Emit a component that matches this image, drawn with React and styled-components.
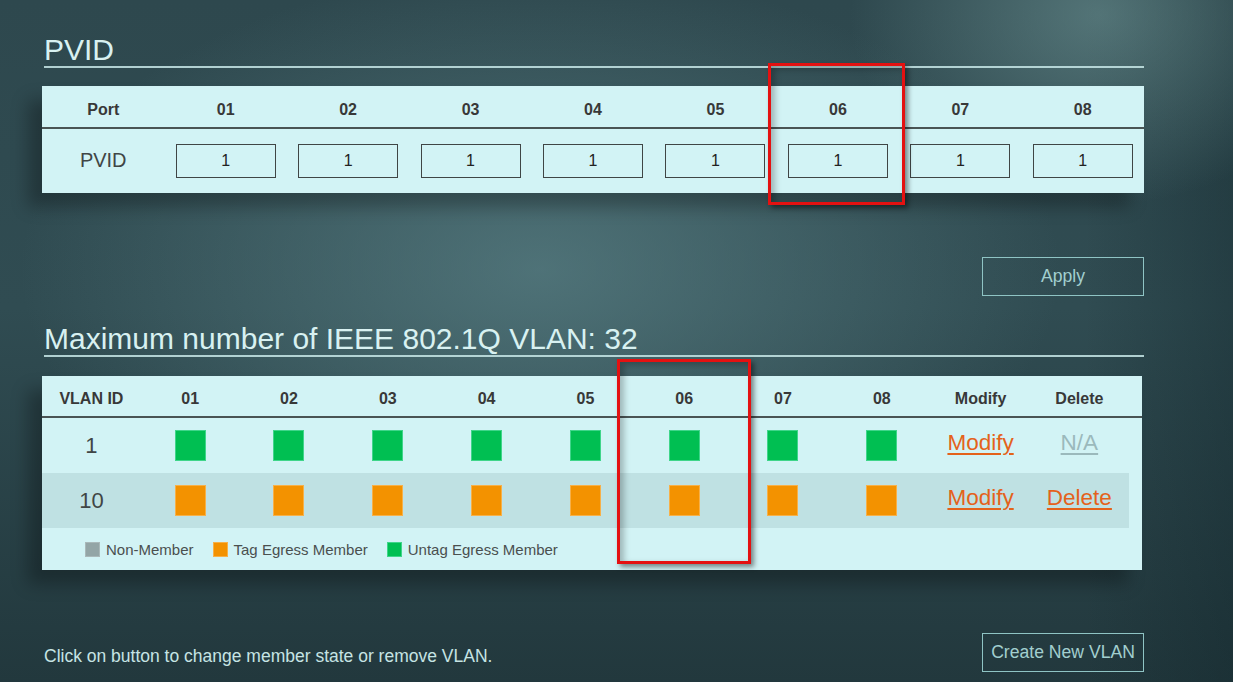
import React from "react";
import styled, { createGlobalStyle } from "styled-components";

const Global = createGlobalStyle`
  html, body { margin: 0; padding: 0; }
  body { font-family: "Liberation Sans", Arial, sans-serif; overflow: hidden; }
`;

const Page = styled.div`
  width: 1233px;
  height: 682px;
  box-sizing: border-box;
  padding: 34px 0 0 42px;
  background:
    radial-gradient(ellipse 250px 190px at 1100px 15px, rgba(120,160,160,0.5), rgba(120,160,160,0) 100%),
    radial-gradient(ellipse 520px 300px at 540px 270px, rgba(95,135,140,0.65), rgba(95,135,140,0) 100%),
    linear-gradient(90deg, rgba(0,0,0,0) 88%, rgba(15,35,40,0.35) 100%),
    linear-gradient(180deg, #2e484e 0%, #304c52 45%, #22383d 100%);
  overflow: hidden;
`;

const Column = styled.div`
  width: 1102px;
  display: flex;
  flex-direction: column;
`;

const Heading = styled.h2`
  margin: ${(p) => p.$mt || 0}px 0 0 2px;
  font-weight: normal;
  font-size: 30px;
  line-height: 32px;
  color: #d8f1f1;
  border-bottom: 2px solid rgba(200, 232, 232, 0.85);
`;

const PanelWrap = styled.div`
  position: relative;
  margin-top: ${(p) => p.$mt}px;
  width: ${(p) => p.$w}px;
`;

const Panel = styled.div`
  background: #d2f3f5;
  box-shadow: -14px 14px 16px rgba(0, 0, 0, 0.28);
  color: #3a3a3a;
`;

const Grid = styled.div`
  display: grid;
  grid-template-columns: ${(p) => p.$cols};
  align-items: center;
  justify-items: center;
  height: ${(p) => p.$h}px;
  box-sizing: border-box;
  padding-right: ${(p) => p.$pr || 0}px;
  padding-top: ${(p) => p.$pt || 0}px;
  background: ${(p) => p.$bg || "transparent"};
  border-bottom: ${(p) => (p.$line ? "2px solid #4a5454" : "none")};
`;

const HeadCell = styled.div`
  font-weight: bold;
  font-size: 16px;
  color: #383838;
`;

const RowLabel = styled.div`
  font-size: 20px;
  color: #404545;
  margin-top: -2px;
`;

const PvidInput = styled.div`
  width: 100px;
  height: 34px;
  box-sizing: border-box;
  border: 1px solid #3f4545;
  display: flex;
  align-items: center;
  justify-content: center;
  font-size: 16px;
  color: #222;
`;

const Highlight = styled.div`
  position: absolute;
  left: ${(p) => p.$l}px;
  top: ${(p) => p.$t}px;
  width: ${(p) => p.$w}px;
  height: ${(p) => p.$h}px;
  box-sizing: border-box;
  border: 3px solid #e41111;
  box-shadow: 3px 3px 5px rgba(0, 0, 0, 0.45), inset 4px 3px 6px rgba(0, 0, 0, 0.25);
  pointer-events: none;
`;

const ButtonRow = styled.div`
  display: flex;
  justify-content: ${(p) => p.$justify || "flex-end"};
  align-items: flex-end;
  margin-top: ${(p) => p.$mt}px;
`;

const OutlineButton = styled.button`
  width: 162px;
  height: ${(p) => p.$h || 38}px;
  background: transparent;
  border: 1px solid #8fc4c4;
  color: #a2cfcf;
  font-family: "Liberation Sans", Arial, sans-serif;
  font-size: 17.6px;
  padding: 0;
`;

const Square = styled.div`
  width: ${(p) => p.$s}px;
  height: ${(p) => p.$s}px;
  box-sizing: border-box;
  background: ${(p) => p.$c};
  border: 1px solid ${(p) => p.$b};
`;

const VlanId = styled.div`
  font-size: 22px;
  color: #404545;
`;

const LinkText = styled.a`
  font-size: 22.5px;
  margin-top: -5px;
  color: ${(p) => (p.$muted ? "#9bb9bc" : "#e4621b")};
  text-decoration: underline;
  text-underline-offset: 3px;
  cursor: pointer;
`;

const Legend = styled.div`
  display: flex;
  align-items: center;
  height: 42px;
  padding-left: 43px;
  font-size: 15px;
  color: #4a4f4f;
`;

const LegendItem = styled.div`
  display: flex;
  align-items: center;
  gap: 6px;
  margin-right: 19px;
`;

const Note = styled.div`
  font-size: 17.5px;
  color: #c6e4e4;
  padding: 0 0 5px 2px;
`;

const ports = ["01", "02", "03", "04", "05", "06", "07", "08"];

const GREEN = { c: "#00bf52", b: "#3fd58a" };
const ORANGE = { c: "#f39200", b: "#f7b048" };
const GREY = { c: "#93a5a6", b: "#a9b8b9" };

const vlanCols = "repeat(11, 98.8px)";

export default function App() {
  return (
    <Page>
      <Global />
      <Column>
        <Heading>PVID</Heading>

        <PanelWrap $mt={18} $w={1102}>
          <Panel>
            <Grid $cols="repeat(9, 1fr)" $h={43} $pt={6} $line>
              <HeadCell>Port</HeadCell>
              {ports.map((p) => (
                <HeadCell key={p}>{p}</HeadCell>
              ))}
            </Grid>
            <Grid $cols="repeat(9, 1fr)" $h={64}>
              <RowLabel>PVID</RowLabel>
              {ports.map((p) => (
                <PvidInput key={p}>1</PvidInput>
              ))}
            </Grid>
          </Panel>
          <Highlight $l={726} $t={-23} $w={137} $h={142} />
        </PanelWrap>

        <ButtonRow $mt={64}>
          <OutlineButton $h={39}>Apply</OutlineButton>
        </ButtonRow>

        <Heading $mt={27}>Maximum number of IEEE 802.1Q VLAN: 32</Heading>

        <PanelWrap $mt={19} $w={1100}>
          <Panel>
            <Grid $cols={vlanCols} $h={42} $pt={5} $line $pr={13}>
              <HeadCell>VLAN ID</HeadCell>
              {ports.map((p) => (
                <HeadCell key={p}>{p}</HeadCell>
              ))}
              <HeadCell>Modify</HeadCell>
              <HeadCell>Delete</HeadCell>
            </Grid>
            <Grid $cols={vlanCols} $h={55} $pr={13}>
              <VlanId>1</VlanId>
              {ports.map((p) => (
                <Square key={p} $s={31} $c={GREEN.c} $b={GREEN.b} />
              ))}
              <LinkText>Modify</LinkText>
              <LinkText $muted>N/A</LinkText>
            </Grid>
            <Grid $cols={vlanCols} $h={55} $bg="#bfe1e3" style={{ width: 1087 }}>
              <VlanId>10</VlanId>
              {ports.map((p) => (
                <Square key={p} $s={31} $c={ORANGE.c} $b={ORANGE.b} />
              ))}
              <LinkText>Modify</LinkText>
              <LinkText>Delete</LinkText>
            </Grid>
            <Legend>
              <LegendItem>
                <Square $s={15} $c={GREY.c} $b={GREY.b} />
                Non-Member
              </LegendItem>
              <LegendItem>
                <Square $s={15} $c={ORANGE.c} $b={ORANGE.b} />
                Tag Egress Member
              </LegendItem>
              <LegendItem>
                <Square $s={15} $c={GREEN.c} $b={GREEN.b} />
                Untag Egress Member
              </LegendItem>
            </Legend>
          </Panel>
          <Highlight $l={575} $t={-17} $w={134} $h={205} />
        </PanelWrap>

        <ButtonRow $mt={63} $justify="space-between">
          <Note>Click on button to change member state or remove VLAN.</Note>
          <OutlineButton $h={39}>Create New VLAN</OutlineButton>
        </ButtonRow>
      </Column>
    </Page>
  );
}
